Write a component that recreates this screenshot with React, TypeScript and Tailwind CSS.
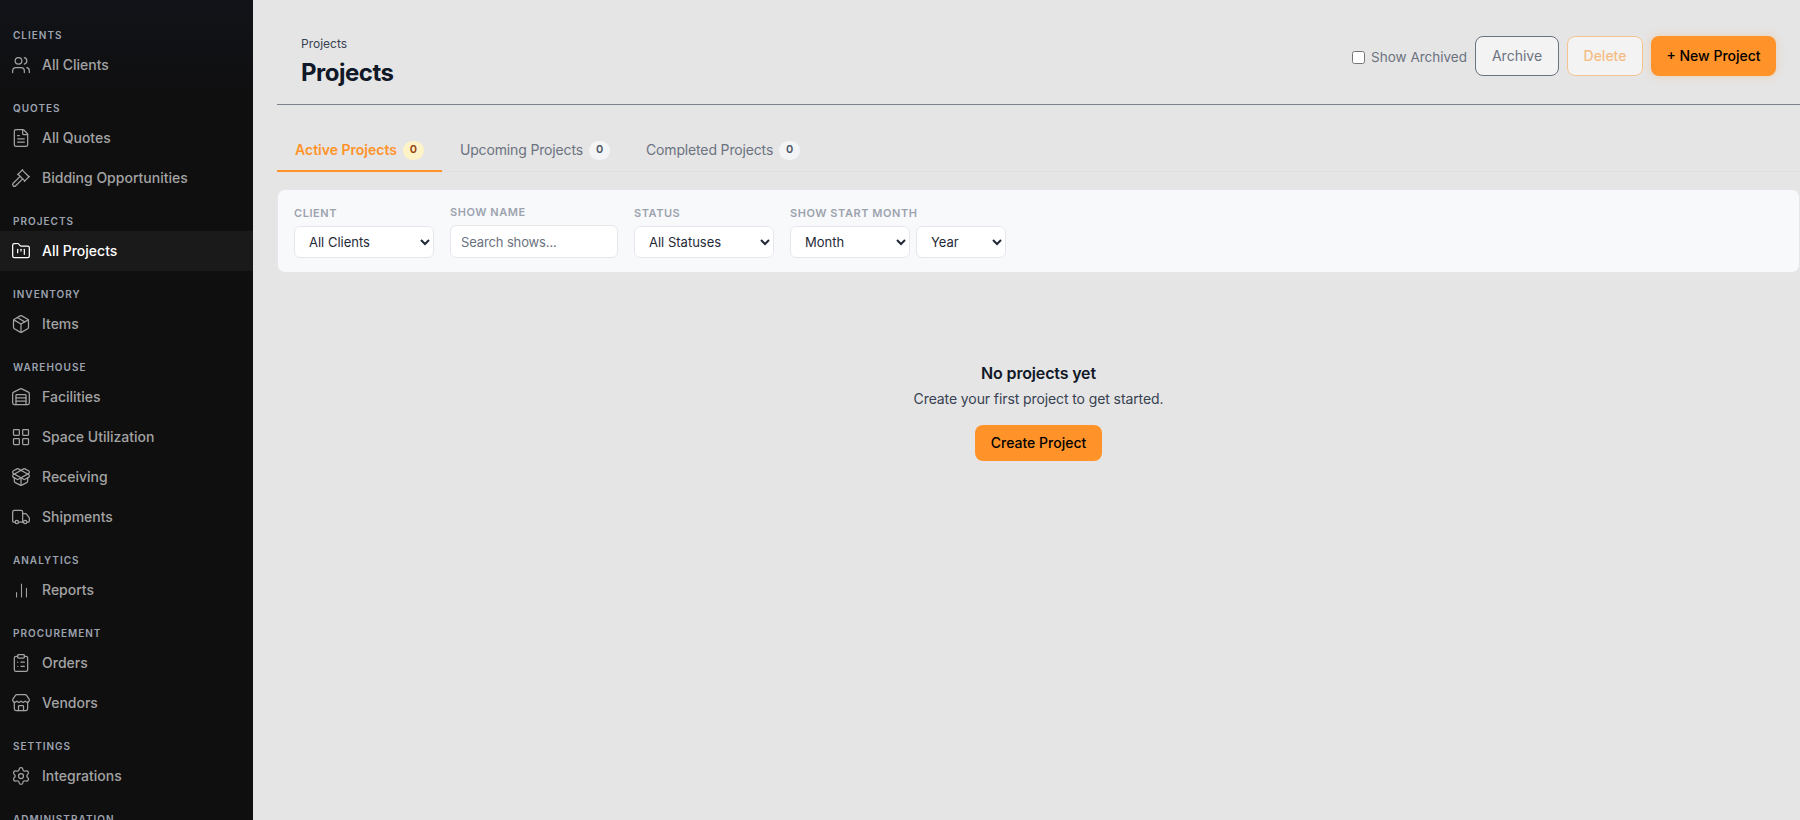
import React from "react";
import {
  Users,
  FileText,
  Gavel,
  FolderKanban,
  Package,
  Warehouse,
  LayoutGrid,
  PackageOpen,
  Truck,
  ChartNoAxesColumn,
  ClipboardList,
  Store,
  Settings,
  LucideIcon,
} from "lucide-react";

interface NavItem {
  label: string;
  icon: LucideIcon;
  iconClass?: string;
  active?: boolean;
}

interface NavSection {
  title: string;
  items: NavItem[];
}

const sections: NavSection[] = [
  { title: "Clients", items: [{ label: "All Clients", icon: Users }] },
  {
    title: "Quotes",
    items: [
      { label: "All Quotes", icon: FileText },
      { label: "Bidding Opportunities", icon: Gavel },
    ],
  },
  { title: "Projects", items: [{ label: "All Projects", icon: FolderKanban, active: true }] },
  { title: "Inventory", items: [{ label: "Items", icon: Package }] },
  {
    title: "Warehouse",
    items: [
      { label: "Facilities", icon: Warehouse },
      { label: "Space Utilization", icon: LayoutGrid },
      { label: "Receiving", icon: PackageOpen },
      { label: "Shipments", icon: Truck },
    ],
  },
  {
    title: "Analytics",
    items: [{ label: "Reports", icon: ChartNoAxesColumn, iconClass: "mx-[1.5px] size-[17px] shrink-0" }],
  },
  {
    title: "Procurement",
    items: [
      { label: "Orders", icon: ClipboardList },
      { label: "Vendors", icon: Store },
    ],
  },
  { title: "Settings", items: [{ label: "Integrations", icon: Settings }] },
  { title: "Administration", items: [] },
];

const selectClass =
  "h-8 rounded-md border border-[#e5e7eb] bg-white pl-[10px] pr-1 text-[13px] text-[#1f2937] outline-none";

const Sidebar = () => (
  <aside className="w-[253px] shrink-0 overflow-hidden bg-gradient-to-b from-[#111318] from-0% to-[#0f0f10] to-[12%] pt-[25px]">
    {sections.map((section) => (
      <div key={section.title} className="mb-[13px]">
        <div className="flex h-5 items-center px-[13px] text-[10px] font-semibold uppercase tracking-[0.1em] text-[#9ca3af]">
          {section.title}
        </div>
        {section.items.map((item) => (
          <div
            key={item.label}
            className={`flex h-10 items-center gap-[9px] px-[11px] text-sm font-medium ${
              item.active ? "bg-[#1a1a1a] text-white" : "text-[#a3a3a3]"
            }`}
          >
            <item.icon className={item.iconClass ?? "size-5 shrink-0"} strokeWidth={1.5} />
            <span className="ml-[2px]">{item.label}</span>
          </div>
        ))}
      </div>
    ))}
  </aside>
);

const tabs = [
  { label: "Active Projects", active: true },
  { label: "Upcoming Projects" },
  { label: "Completed Projects" },
];

const Tabs = () => (
  <div className="ml-6 mt-[25px] flex h-[42px] border-b border-[#e0e0e2]">
    {tabs.map((tab) => (
      <div
        key={tab.label}
        className={`-mb-px flex items-center gap-[6px] border-b-2 px-[18px] text-sm ${
          tab.active
            ? "border-[#ff9329] font-semibold text-[#ff9329]"
            : "border-transparent font-normal tracking-[-0.15px] text-[#6b7280]"
        }`}
      >
        {tab.label}
        <span
          className={`flex h-[19px] w-[21px] items-center justify-center rounded-full text-[11px] font-semibold ${
            tab.active ? "bg-[#fef3c7] text-[#92400e]" : "bg-[#f3f4f6] text-[#4b5563]"
          }`}
        >
          0
        </span>
      </div>
    ))}
  </div>
);

const filterLabel = "text-[11px] font-semibold uppercase tracking-[0.05em] text-[#9ca3af]";

const Filters = () => (
  <div className="ml-6 mt-[17px] flex h-[84px] items-end gap-4 rounded-lg border border-[#e5e7eb] bg-[#f8f9fb] px-4 pb-[14px]">
    <div className="flex flex-col gap-[5px]">
      <label className={filterLabel}>Client</label>
      <select className={`${selectClass} w-[140px]`}>
        <option>All Clients</option>
      </select>
    </div>
    <div className="flex flex-col gap-[5px]">
      <label className={filterLabel}>Show Name</label>
      <input
        placeholder="Search shows..."
        className="h-[33px] w-[168px] rounded-md border border-[#e5e7eb] bg-white px-[10px] text-[13px] tracking-[-0.01em] text-[#1f2937] outline-none placeholder:text-[#6b7280]"
      />
    </div>
    <div className="flex flex-col gap-[5px]">
      <label className={filterLabel}>Status</label>
      <select className={`${selectClass} w-[140px]`}>
        <option>All Statuses</option>
      </select>
    </div>
    <div className="flex flex-col gap-[5px]">
      <label className={filterLabel}>Show Start Month</label>
      <div className="flex gap-[6px]">
        <select className={`${selectClass} w-[120px]`}>
          <option>Month</option>
        </select>
        <select className={`${selectClass} w-[90px]`}>
          <option>Year</option>
        </select>
      </div>
    </div>
  </div>
);

export default function App() {
  return (
    <div className="flex h-[820px] w-[1800px] overflow-hidden bg-[#e5e5e5] font-['Inter',sans-serif]">
      <Sidebar />
      <main className="min-w-0 flex-1">
        <header className="ml-6 flex h-[105px] items-start justify-between border-b border-[#7c8290] px-6">
          <div className="pt-9">
            <div className="text-xs leading-4 text-[#374151]">Projects</div>
            <h1 className="mt-[5px] text-2xl font-bold leading-8 tracking-[-0.5px] text-[#111827]">Projects</h1>
          </div>
          <div className="flex items-center gap-2 pt-9">
            <label className="flex items-center gap-[6px] pt-[2px] text-[13.5px] text-[#6b7280]">
              <input type="checkbox" className="size-[13px]" />
              Show Archived
            </label>
            <button className="h-10 w-[84px] rounded-lg border border-[#6b7280] bg-[#f3f3f3] text-sm font-normal text-[#6b7280]">
              Archive
            </button>
            <button className="h-10 w-[76px] rounded-lg border border-[#f5c48e] bg-[#f3f3f3] text-sm font-medium text-[#f5bd85]">
              Delete
            </button>
            <button className="h-10 w-[125px] rounded-lg bg-[#ff9329] text-sm font-medium text-black shadow-[0_0_10px_rgba(255,147,41,0.25)]">
              + New Project
            </button>
          </div>
        </header>
        <Tabs />
        <Filters />
        <div className="ml-6 flex flex-col items-center pt-[88px]">
          <h3 className="text-base font-semibold leading-6 tracking-[-0.01em] text-[#111827]">No projects yet</h3>
          <p className="mt-1 text-sm leading-5 tracking-[-0.1px] text-[#374151]">Create your first project to get started.</p>
          <button className="mt-4 h-9 w-[127px] rounded-lg bg-[#ff9329] text-sm font-medium text-black">
            Create Project
          </button>
        </div>
      </main>
    </div>
  );
}
